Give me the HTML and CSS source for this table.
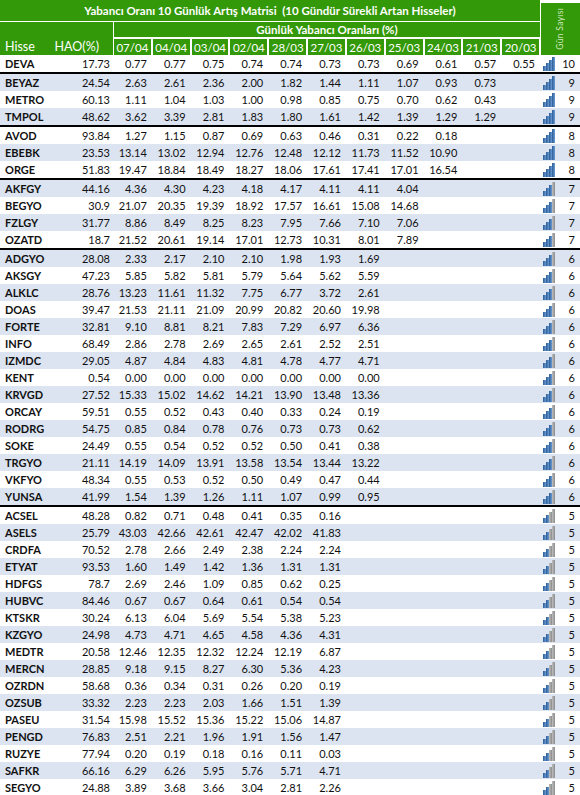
FILE: index.html
```html
<!DOCTYPE html>
<html lang="tr">
<head>
<meta charset="utf-8">
<title>Yabancı Oranı 10 Günlük Artış Matrisi</title>
<link rel="stylesheet" href="styles.css">
</head>
<body>
<div class="sheet">
  <div class="head">
    <div class="title">Yabancı Oranı 10 Günlük Artış Matrisi &nbsp;(10 Gündür Sürekli Artan Hisseler)</div>
    <div class="gun-head"><span>Gün Sayısı</span></div>
    <div class="hisse-head"><span>Hisse</span><span>HAO(%)</span></div>
    <div class="sub">Günlük Yabancı Oranları (%)</div>
    <div class="d">07/04</div><div class="d">04/04</div><div class="d">03/04</div><div class="d">02/04</div><div class="d">28/03</div><div class="d">27/03</div><div class="d">26/03</div><div class="d">25/03</div><div class="d">24/03</div><div class="d">21/03</div><div class="d">20/03</div>
  </div>
  <div class="rows">
    <div class="row end"><b>DEVA</b><i>17.73</i><span>0.77</span><span>0.77</span><span>0.75</span><span>0.74</span><span>0.74</span><span>0.73</span><span>0.73</span><span>0.69</span><span>0.61</span><span>0.57</span><span>0.55</span><em class="sig s4"><u></u><u></u><u></u><u></u></em><s>10</s></div>
    <div class="row"><b>BEYAZ</b><i>24.54</i><span>2.63</span><span>2.61</span><span>2.36</span><span>2.00</span><span>1.82</span><span>1.44</span><span>1.11</span><span>1.07</span><span>0.93</span><span>0.73</span><em class="sig s4"><u></u><u></u><u></u><u></u></em><s>9</s></div>
    <div class="row"><b>METRO</b><i>60.13</i><span>1.11</span><span>1.04</span><span>1.03</span><span>1.00</span><span>0.98</span><span>0.85</span><span>0.75</span><span>0.70</span><span>0.62</span><span>0.43</span><em class="sig s4"><u></u><u></u><u></u><u></u></em><s>9</s></div>
    <div class="row end"><b>TMPOL</b><i>48.62</i><span>3.62</span><span>3.39</span><span>2.81</span><span>1.83</span><span>1.80</span><span>1.61</span><span>1.42</span><span>1.39</span><span>1.29</span><span>1.29</span><em class="sig s4"><u></u><u></u><u></u><u></u></em><s>9</s></div>
    <div class="row"><b>AVOD</b><i>93.84</i><span>1.27</span><span>1.15</span><span>0.87</span><span>0.69</span><span>0.63</span><span>0.46</span><span>0.31</span><span>0.22</span><span>0.18</span><em class="sig s4"><u></u><u></u><u></u><u></u></em><s>8</s></div>
    <div class="row"><b>EBEBK</b><i>23.53</i><span>13.14</span><span>13.02</span><span>12.94</span><span>12.76</span><span>12.48</span><span>12.12</span><span>11.73</span><span>11.52</span><span>10.90</span><em class="sig s4"><u></u><u></u><u></u><u></u></em><s>8</s></div>
    <div class="row end"><b>ORGE</b><i>51.83</i><span>19.47</span><span>18.84</span><span>18.49</span><span>18.27</span><span>18.06</span><span>17.61</span><span>17.41</span><span>17.01</span><span>16.54</span><em class="sig s4"><u></u><u></u><u></u><u></u></em><s>8</s></div>
    <div class="row"><b>AKFGY</b><i>44.16</i><span>4.36</span><span>4.30</span><span>4.23</span><span>4.18</span><span>4.17</span><span>4.11</span><span>4.11</span><span>4.04</span><em class="sig s3"><u></u><u></u><u></u><u></u></em><s>7</s></div>
    <div class="row"><b>BEGYO</b><i>30.9</i><span>21.07</span><span>20.35</span><span>19.39</span><span>18.92</span><span>17.57</span><span>16.61</span><span>15.08</span><span>14.68</span><em class="sig s3"><u></u><u></u><u></u><u></u></em><s>7</s></div>
    <div class="row"><b>FZLGY</b><i>31.77</i><span>8.86</span><span>8.49</span><span>8.25</span><span>8.23</span><span>7.95</span><span>7.66</span><span>7.10</span><span>7.06</span><em class="sig s3"><u></u><u></u><u></u><u></u></em><s>7</s></div>
    <div class="row end"><b>OZATD</b><i>18.7</i><span>21.52</span><span>20.61</span><span>19.14</span><span>17.01</span><span>12.73</span><span>10.31</span><span>8.01</span><span>7.89</span><em class="sig s3"><u></u><u></u><u></u><u></u></em><s>7</s></div>
    <div class="row"><b>ADGYO</b><i>28.08</i><span>2.33</span><span>2.17</span><span>2.10</span><span>2.10</span><span>1.98</span><span>1.93</span><span>1.69</span><em class="sig s3"><u></u><u></u><u></u><u></u></em><s>6</s></div>
    <div class="row"><b>AKSGY</b><i>47.23</i><span>5.85</span><span>5.82</span><span>5.81</span><span>5.79</span><span>5.64</span><span>5.62</span><span>5.59</span><em class="sig s3"><u></u><u></u><u></u><u></u></em><s>6</s></div>
    <div class="row"><b>ALKLC</b><i>28.76</i><span>13.23</span><span>11.61</span><span>11.32</span><span>7.75</span><span>6.77</span><span>3.72</span><span>2.61</span><em class="sig s3"><u></u><u></u><u></u><u></u></em><s>6</s></div>
    <div class="row"><b>DOAS</b><i>39.47</i><span>21.53</span><span>21.11</span><span>21.09</span><span>20.99</span><span>20.82</span><span>20.60</span><span>19.98</span><em class="sig s3"><u></u><u></u><u></u><u></u></em><s>6</s></div>
    <div class="row"><b>FORTE</b><i>32.81</i><span>9.10</span><span>8.81</span><span>8.21</span><span>7.83</span><span>7.29</span><span>6.97</span><span>6.36</span><em class="sig s3"><u></u><u></u><u></u><u></u></em><s>6</s></div>
    <div class="row"><b>INFO</b><i>68.49</i><span>2.86</span><span>2.78</span><span>2.69</span><span>2.65</span><span>2.61</span><span>2.52</span><span>2.51</span><em class="sig s3"><u></u><u></u><u></u><u></u></em><s>6</s></div>
    <div class="row"><b>IZMDC</b><i>29.05</i><span>4.87</span><span>4.84</span><span>4.83</span><span>4.81</span><span>4.78</span><span>4.77</span><span>4.71</span><em class="sig s3"><u></u><u></u><u></u><u></u></em><s>6</s></div>
    <div class="row"><b>KENT</b><i>0.54</i><span>0.00</span><span>0.00</span><span>0.00</span><span>0.00</span><span>0.00</span><span>0.00</span><span>0.00</span><em class="sig s3"><u></u><u></u><u></u><u></u></em><s>6</s></div>
    <div class="row"><b>KRVGD</b><i>27.52</i><span>15.33</span><span>15.02</span><span>14.62</span><span>14.21</span><span>13.90</span><span>13.48</span><span>13.36</span><em class="sig s3"><u></u><u></u><u></u><u></u></em><s>6</s></div>
    <div class="row"><b>ORCAY</b><i>59.51</i><span>0.55</span><span>0.52</span><span>0.43</span><span>0.40</span><span>0.33</span><span>0.24</span><span>0.19</span><em class="sig s3"><u></u><u></u><u></u><u></u></em><s>6</s></div>
    <div class="row"><b>RODRG</b><i>54.75</i><span>0.85</span><span>0.84</span><span>0.78</span><span>0.76</span><span>0.73</span><span>0.73</span><span>0.62</span><em class="sig s3"><u></u><u></u><u></u><u></u></em><s>6</s></div>
    <div class="row"><b>SOKE</b><i>24.49</i><span>0.55</span><span>0.54</span><span>0.52</span><span>0.52</span><span>0.50</span><span>0.41</span><span>0.38</span><em class="sig s3"><u></u><u></u><u></u><u></u></em><s>6</s></div>
    <div class="row"><b>TRGYO</b><i>21.11</i><span>14.19</span><span>14.09</span><span>13.91</span><span>13.58</span><span>13.54</span><span>13.44</span><span>13.22</span><em class="sig s3"><u></u><u></u><u></u><u></u></em><s>6</s></div>
    <div class="row"><b>VKFYO</b><i>48.34</i><span>0.55</span><span>0.53</span><span>0.52</span><span>0.50</span><span>0.49</span><span>0.47</span><span>0.44</span><em class="sig s3"><u></u><u></u><u></u><u></u></em><s>6</s></div>
    <div class="row end"><b>YUNSA</b><i>41.99</i><span>1.54</span><span>1.39</span><span>1.26</span><span>1.11</span><span>1.07</span><span>0.99</span><span>0.95</span><em class="sig s3"><u></u><u></u><u></u><u></u></em><s>6</s></div>
    <div class="row"><b>ACSEL</b><i>48.28</i><span>0.82</span><span>0.71</span><span>0.48</span><span>0.41</span><span>0.35</span><span>0.16</span><em class="sig s2"><u></u><u></u><u></u><u></u></em><s>5</s></div>
    <div class="row"><b>ASELS</b><i>25.79</i><span>43.03</span><span>42.66</span><span>42.61</span><span>42.47</span><span>42.02</span><span>41.83</span><em class="sig s2"><u></u><u></u><u></u><u></u></em><s>5</s></div>
    <div class="row"><b>CRDFA</b><i>70.52</i><span>2.78</span><span>2.66</span><span>2.49</span><span>2.38</span><span>2.24</span><span>2.24</span><em class="sig s2"><u></u><u></u><u></u><u></u></em><s>5</s></div>
    <div class="row"><b>ETYAT</b><i>93.53</i><span>1.60</span><span>1.49</span><span>1.42</span><span>1.36</span><span>1.31</span><span>1.31</span><em class="sig s2"><u></u><u></u><u></u><u></u></em><s>5</s></div>
    <div class="row"><b>HDFGS</b><i>78.7</i><span>2.69</span><span>2.46</span><span>1.09</span><span>0.85</span><span>0.62</span><span>0.25</span><em class="sig s2"><u></u><u></u><u></u><u></u></em><s>5</s></div>
    <div class="row"><b>HUBVC</b><i>84.46</i><span>0.67</span><span>0.67</span><span>0.64</span><span>0.61</span><span>0.54</span><span>0.54</span><em class="sig s2"><u></u><u></u><u></u><u></u></em><s>5</s></div>
    <div class="row"><b>KTSKR</b><i>30.24</i><span>6.13</span><span>6.04</span><span>5.69</span><span>5.54</span><span>5.38</span><span>5.23</span><em class="sig s2"><u></u><u></u><u></u><u></u></em><s>5</s></div>
    <div class="row"><b>KZGYO</b><i>24.98</i><span>4.73</span><span>4.71</span><span>4.65</span><span>4.58</span><span>4.36</span><span>4.31</span><em class="sig s2"><u></u><u></u><u></u><u></u></em><s>5</s></div>
    <div class="row"><b>MEDTR</b><i>20.58</i><span>12.46</span><span>12.35</span><span>12.32</span><span>12.24</span><span>12.19</span><span>6.87</span><em class="sig s2"><u></u><u></u><u></u><u></u></em><s>5</s></div>
    <div class="row"><b>MERCN</b><i>28.85</i><span>9.18</span><span>9.15</span><span>8.27</span><span>6.30</span><span>5.36</span><span>4.23</span><em class="sig s2"><u></u><u></u><u></u><u></u></em><s>5</s></div>
    <div class="row"><b>OZRDN</b><i>58.68</i><span>0.36</span><span>0.34</span><span>0.31</span><span>0.26</span><span>0.20</span><span>0.19</span><em class="sig s2"><u></u><u></u><u></u><u></u></em><s>5</s></div>
    <div class="row"><b>OZSUB</b><i>33.32</i><span>2.23</span><span>2.23</span><span>2.03</span><span>1.66</span><span>1.51</span><span>1.39</span><em class="sig s2"><u></u><u></u><u></u><u></u></em><s>5</s></div>
    <div class="row"><b>PASEU</b><i>31.54</i><span>15.98</span><span>15.52</span><span>15.36</span><span>15.22</span><span>15.06</span><span>14.87</span><em class="sig s2"><u></u><u></u><u></u><u></u></em><s>5</s></div>
    <div class="row"><b>PENGD</b><i>76.83</i><span>2.51</span><span>2.21</span><span>1.96</span><span>1.91</span><span>1.56</span><span>1.47</span><em class="sig s2"><u></u><u></u><u></u><u></u></em><s>5</s></div>
    <div class="row"><b>RUZYE</b><i>77.94</i><span>0.20</span><span>0.19</span><span>0.18</span><span>0.16</span><span>0.11</span><span>0.03</span><em class="sig s2"><u></u><u></u><u></u><u></u></em><s>5</s></div>
    <div class="row"><b>SAFKR</b><i>66.16</i><span>6.29</span><span>6.26</span><span>5.95</span><span>5.76</span><span>5.71</span><span>4.71</span><em class="sig s2"><u></u><u></u><u></u><u></u></em><s>5</s></div>
    <div class="row"><b>SEGYO</b><i>24.88</i><span>3.89</span><span>3.68</span><span>3.66</span><span>3.04</span><span>2.81</span><span>2.26</span><em class="sig s2"><u></u><u></u><u></u><u></u></em><s>5</s></div>
    <div class="row"></div>
  </div>
</div>
</body>
</html>
```

FILE: styles.css
```css
* { box-sizing: border-box; }
html, body { margin: 0; padding: 0; background: #fff; }
body {
  width: 580px;
  font-family: Lato, "Open Sans", "Liberation Sans", sans-serif;
  color: #111;
  overflow: hidden;
}
.sheet { width: 580px; }

/* ---------- header ---------- */
.head {
  display: grid;
  grid-template-columns: 113px repeat(11, minmax(0, 1fr)) 40px;
  grid-template-rows: 22px 16px 17px;
  color: #fff;
}
.head > div {
  background: #339908;
  background-clip: padding-box;
  border: 0 solid #fff;
}
.title {
  grid-column: 1 / 13;
  grid-row: 1;
  border-bottom-width: 1px !important;
  font-weight: 700;
  font-size: 11.5px;
  display: flex;
  align-items: center;
  justify-content: center;
  white-space: pre;
}
.gun-head {
  grid-column: 13;
  grid-row: 1 / 4;
  border-left-width: 1px !important;
  border-top-width: 3px !important;
  display: flex;
  align-items: center;
  justify-content: center;
}
.gun-head span {
  writing-mode: vertical-rl;
  transform: rotate(180deg);
  font-size: 8.5px;
  color: #cfe6bd;
  letter-spacing: 0.3px;
}
.hisse-head {
  grid-column: 1;
  grid-row: 2 / 4;
  display: flex;
  justify-content: space-between;
  align-items: flex-end;
  padding: 0 14px 1px 5px;
  font-size: 12.5px;
}
.sub {
  grid-column: 2 / 13;
  grid-row: 2;
  border-left-width: 1px !important;
  border-bottom-width: 1px !important;
  font-weight: 700;
  font-size: 11.5px;
  display: flex;
  align-items: center;
  justify-content: center;
}
.d {
  grid-row: 3;
  border-width: 1px 1px 0 1px !important;
  font-size: 11.5px;
  display: flex;
  align-items: center;
  justify-content: center;
}

/* ---------- rows ---------- */
.row {
  display: grid;
  grid-template-columns: 57px 56px repeat(11, minmax(0, 1fr)) 18px 22px;
  height: 17px;
  align-items: center;
  font-size: 11px;
  line-height: 17px;
}
.row:nth-child(even) { background: #dce4f1; }
.row.end { height: 19px; border-bottom: 2px solid #000; }
.row b {
  grid-column: 1;
  font-weight: 700;
  padding-left: 5px;
  white-space: nowrap;
}
.row i {
  grid-column: 2;
  font-style: normal;
  text-align: right;
  padding-right: 3px;
}
.row span {
  text-align: right;
  padding-right: 5px;
  white-space: nowrap;
}
.row s {
  grid-column: 15;
  text-decoration: none;
  text-align: right;
  padding-right: 5px;
}

/* signal icon */
.sig {
  grid-column: 14;
  display: flex;
  align-items: flex-end;
  gap: 0.5px;
  height: 14px;
  margin-left: 3px;
  align-self: center;
}
.sig u {
  display: block;
  width: 2.6px;
  background: linear-gradient(90deg, #bfbfbf, #8c8c8c);
}
.sig u:nth-child(1) { height: 5px; }
.sig u:nth-child(2) { height: 8px; }
.sig u:nth-child(3) { height: 11px; }
.sig u:nth-child(4) { height: 14px; }
.s4 u,
.s3 u:nth-child(-n+3),
.s2 u:nth-child(-n+2) {
  background: linear-gradient(90deg, #2c5c95, #6a9bd3);
}
```
